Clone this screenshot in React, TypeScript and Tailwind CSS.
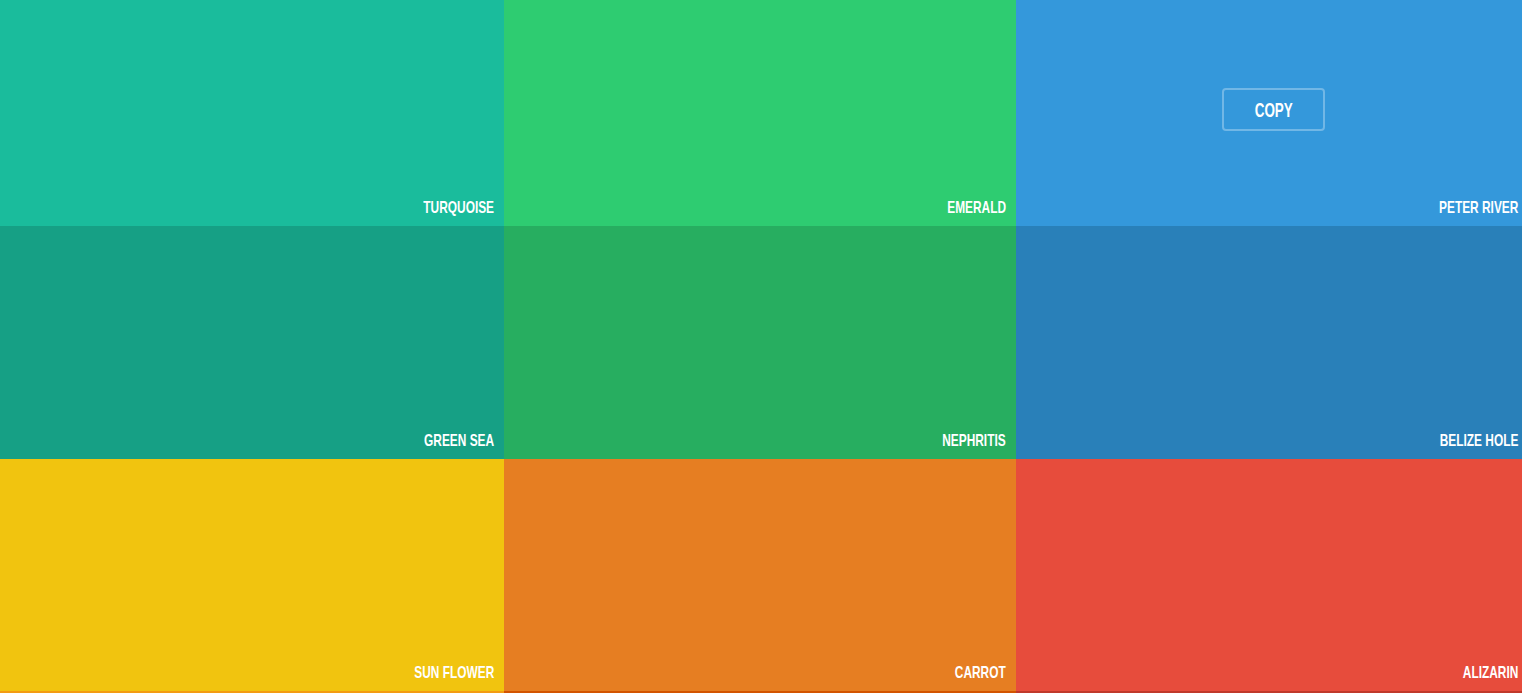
import React from 'react';

const colors = [
  { name: 'TURQUOISE', bg: 'bg-[#1abc9c]' },
  { name: 'EMERALD', bg: 'bg-[#2ecc71]' },
  { name: 'PETER RIVER', bg: 'bg-[#3498db]', copy: true },
  { name: 'GREEN SEA', bg: 'bg-[#16a085]' },
  { name: 'NEPHRITIS', bg: 'bg-[#27ae60]' },
  { name: 'BELIZE HOLE', bg: 'bg-[#2980b9]' },
  { name: 'SUN FLOWER', bg: 'bg-[#f1c40f]' },
  { name: 'CARROT', bg: 'bg-[#e67e22]' },
  { name: 'ALIZARIN', bg: 'bg-[#e74c3c]' },
];

// next row, only its top edge shows in the viewport
const nextRow = ['bg-[#f39c12]', 'bg-[#d35400]', 'bg-[#c0392b]'];

function Swatch({ name, bg, copy }: { name: string; bg: string; copy?: boolean }) {
  return (
    <div className={`${bg} h-[232.5px] flex flex-col items-center justify-center relative`}>
      {copy && (
        <button className="w-[103px] h-[43px] ml-[3px] border-2 border-white/30 rounded-[4px] flex items-center justify-center">
          <span className="inline-block scale-x-[0.64] text-white text-[21px] font-bold leading-none font-['Liberation_Sans',sans-serif]">
            COPY
          </span>
        </button>
      )}
      <span className="absolute right-[10px] bottom-[10px] origin-right scale-x-[0.7] text-white text-[17px] font-bold leading-none whitespace-nowrap font-['Liberation_Sans',sans-serif]">
        {name}
      </span>
    </div>
  );
}

export default function App() {
  return (
    <div className="w-[1522px] h-[693px] overflow-hidden bg-white">
      <div className="grid grid-cols-[512px_512px_512px] -ml-[8px] -mt-[6.5px]">
        {colors.map((c) => (
          <Swatch key={c.name} {...c} />
        ))}
        {nextRow.map((bg) => (
          <div key={bg} className={`${bg} h-[20px]`} />
        ))}
      </div>
    </div>
  );
}
